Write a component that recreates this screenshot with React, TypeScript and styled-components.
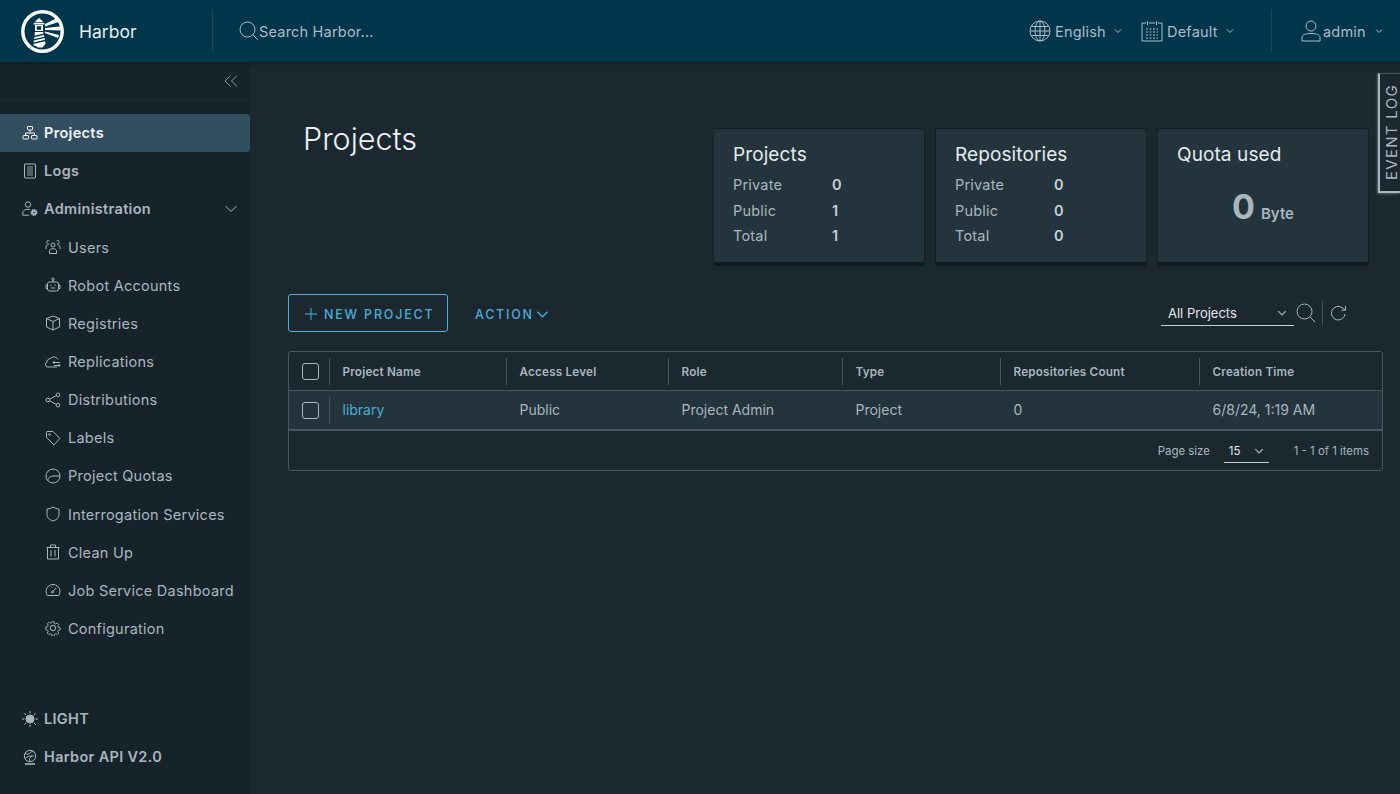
import React from "react";
import styled, { createGlobalStyle } from "styled-components";

const GlobalStyle = createGlobalStyle`
  html, body {
    margin: 0;
    height: 100%;
    background: #1c2830;
    font-family: Inter, "Open Sans", sans-serif;
    overflow: hidden;
  }
  #root {
    height: 100%;
  }
  * {
    box-sizing: border-box;
  }
`;

const Page = styled.div`
  height: 794px;
  display: flex;
  flex-direction: column;
  position: relative;
`;

const Header = styled.header`
  height: 62px;
  flex: none;
  background: #00364c;
  display: flex;
  align-items: center;
  color: #adbbc4;
  box-shadow: 0 2px 3px rgba(0, 0, 0, 0.25);
  z-index: 2;
`;

const Brand = styled.div`
  width: 213px;
  height: 42px;
  padding-left: 21px;
  display: flex;
  align-items: center;
  gap: 15px;
  border-right: 1px solid #1a4a60;
  color: #e9ecef;
  font-size: 17.5px;
`;

const SearchBox = styled.div`
  margin-left: 26px;
  display: flex;
  align-items: center;
  font-size: 14.5px;
  letter-spacing: 0.2px;
  color: #adbbc4;
`;

const HeaderRight = styled.div`
  margin-left: auto;
  display: flex;
  align-items: center;
`;

const HeaderMenu = styled.div<{ $gap?: number; $width: number; $left?: number }>`
  width: ${(p) => p.$width}px;
  margin-left: ${(p) => p.$left ?? 0}px;
  display: flex;
  align-items: center;
  gap: ${(p) => p.$gap ?? 4}px;
  font-size: 14.5px;
  letter-spacing: 0.2px;
`;

const Caret = styled.span<{ $right?: number }>`
  margin-left: auto;
  margin-right: ${(p) => p.$right ?? 0}px;
  display: flex;
`;

const DimCaret = styled.span`
  display: flex;
  color: #a9b6be;
`;

const HeaderDivider = styled.div`
  width: 1px;
  height: 42px;
  background: #1a4a60;
  margin: 0 29px 0 37px;
`;

const Body = styled.div`
  flex: 1;
  display: flex;
  min-height: 0;
`;

const Sidebar = styled.nav`
  width: 250px;
  flex: none;
  background: #17232b;
  display: flex;
  flex-direction: column;
  padding-bottom: 18px;
`;

const CollapseBar = styled.div`
  height: 38px;
  flex: none;
  margin-bottom: 14px;
  padding-right: 12px;
  display: flex;
  align-items: center;
  justify-content: flex-end;
  color: #8a9aa5;
  border-bottom: 1px solid #1c2a33;
`;

const NavItem = styled.a<{ $active?: boolean; $child?: boolean }>`
  height: ${(p) => (p.$child ? 38.15 : 38)}px;
  flex: none;
  display: flex;
  align-items: center;
  gap: ${(p) => (p.$child ? 7 : 6)}px;
  padding-left: ${(p) => (p.$child ? 45 : 22)}px;
  padding-right: 12px;
  padding-bottom: ${(p) => (p.$child ? 0 : 1)}px;
  border-radius: 0 4px 4px 0;
  font-size: 14.5px;
  font-weight: ${(p) => (p.$child ? 400 : 600)};
  letter-spacing: ${(p) => (p.$child ? 0.25 : 0.32)}px;
  color: ${(p) => (p.$active ? "#f1f3f5" : "#a9b6be")};
  background: ${(p) => (p.$active ? "#324f61" : "transparent")};
`;

const NavFooter = styled.div`
  margin-top: auto;
  display: flex;
  flex-direction: column;
`;

const Main = styled.main`
  flex: 1;
  min-width: 0;
  padding: 66px 17px 0 38px;
  background: #1c2830;
`;

const TopRow = styled.div`
  display: flex;
  align-items: flex-start;
`;

const Title = styled.h1`
  margin: 0;
  padding: 0 0 0 15px;
  font-size: 30.5px;
  line-height: 22px;
  font-weight: 300;
  color: #eef1f3;
`;

const Cards = styled.div`
  margin-left: auto;
  margin-right: 14px;
  display: flex;
  gap: 10px;
`;

const Card = styled.section`
  width: 212px;
  height: 138px;
  background: #23343c;
  border: 1px solid #131e25;
  border-bottom: 4px solid #10191f;
  border-radius: 3px;
  padding: 14px 19px;
`;

const CardTitle = styled.h3`
  margin: 0 0 5px;
  font-size: 19px;
  line-height: 24px;
  font-weight: 400;
  letter-spacing: 0.1px;
  color: #e6eaed;
`;

const StatRow = styled.div`
  height: 25.5px;
  display: grid;
  grid-template-columns: 99px 1fr;
  align-items: center;
  font-size: 14.5px;
  letter-spacing: 0.2px;
  color: #a9b6be;
`;

const StatValue = styled.span`
  font-weight: 600;
  color: #c9d1d6;
`;

const QuotaValue = styled.div`
  margin-top: 22px;
  display: flex;
  justify-content: center;
  align-items: baseline;
  gap: 6px;
  color: #a9b6be;
  font-size: 15px;
  font-weight: 600;
`;

const QuotaNumber = styled.span`
  font-size: 34px;
  line-height: 36px;
  font-weight: 700;
`;

const Toolbar = styled.div`
  margin-top: 28px;
  height: 38px;
  display: flex;
  align-items: center;
  padding-right: 36px;
`;

const NewButton = styled.button`
  width: 160px;
  height: 38px;
  padding: 2px 0 0 15px;
  display: flex;
  align-items: center;
  gap: 6px;
  background: transparent;
  border: 1px solid #49afd9;
  border-radius: 3px;
  color: #49afd9;
  font-family: inherit;
  font-size: 12.5px;
  font-weight: 500;
  letter-spacing: 1.8px;
`;

const ActionButton = styled.button`
  margin-left: 27px;
  padding: 2px 0 0;
  display: flex;
  align-items: center;
  gap: 2px;
  background: transparent;
  border: 0;
  color: #49afd9;
  font-family: inherit;
  font-size: 12.5px;
  font-weight: 500;
  letter-spacing: 1.75px;
`;

const Filter = styled.div`
  margin-left: auto;
  margin-right: 2px;
  width: 133px;
  height: 25px;
  padding: 0 7px;
  display: flex;
  align-items: center;
  justify-content: space-between;
  border-bottom: 1px solid #c5ced3;
  color: #e3e7ea;
  font-size: 13px;
`;

const ToolIcon = styled.span`
  display: flex;
  color: #a9b6be;
`;

const ToolDivider = styled.span`
  width: 1px;
  height: 24px;
  margin: 0 7px 0 6px;
  background: #46555f;
`;

const Table = styled.div`
  margin-top: 19px;
  border: 1px solid #485862;
  border-radius: 3px;
`;

const Row = styled.div<{ $head?: boolean }>`
  height: ${(p) => (p.$head ? 39 : 40)}px;
  display: grid;
  grid-template-columns: 41px 177px 162px 174px 158px 199px 1fr;
  align-items: center;
  background: ${(p) => (p.$head ? "transparent" : "#23343c")};
  border-bottom: ${(p) => (p.$head ? "1px solid #46555f" : "2px solid #46555f")};
`;

const CheckCell = styled.div`
  height: 27px;
  padding-left: 13px;
  display: flex;
  align-items: center;
  border-right: 1px solid #46555f;
`;

const Checkbox = styled.span`
  width: 17px;
  height: 17px;
  border: 1px solid #a9b6be;
  border-radius: 3px;
`;

const HeadCell = styled.div<{ $last?: boolean }>`
  height: 27px;
  padding: 1px 0 0 12.5px;
  display: flex;
  align-items: center;
  border-right: ${(p) => (p.$last ? "0" : "1px solid #46555f")};
  font-size: 11.7px;
  font-weight: 600;
  letter-spacing: 0.2px;
  color: #a9b6be;
`;

const Cell = styled.div`
  padding: 0 0 2px 12.5px;
  font-size: 14px;
  color: #a9b6be;
`;

const LinkCell = styled(Cell)`
  color: #49afd9;
`;

const TableFooter = styled.div`
  height: 39px;
  padding: 0 13px 0 0;
  display: flex;
  align-items: center;
  justify-content: flex-end;
  font-size: 11.4px;
  color: #a9b6be;
`;

const PageSize = styled.div`
  width: 45px;
  height: 24px;
  margin: 0 25px 0 14px;
  padding: 1px 5px 0;
  display: flex;
  align-items: center;
  justify-content: space-between;
  border-bottom: 1px solid #c5ced3;
  color: #e3e7ea;
`;

const EventLog = styled.div`
  position: absolute;
  top: 73px;
  right: 0;
  width: 22px;
  height: 120px;
  padding-left: 2px;
  display: flex;
  align-items: center;
  justify-content: center;
  background: #1c2830;
  border-left: 2px solid #a9b6be;
  border-bottom: 2px solid #a9b6be;
  border-top: 1px solid #46555f;
  box-shadow: -1px 1px 2px rgba(170, 182, 190, 0.45);
  color: #a9b6be;
`;

const EventLabel = styled.span`
  writing-mode: vertical-rl;
  transform: rotate(180deg);
  font-size: 15px;
  letter-spacing: 1.3px;
  white-space: nowrap;
`;

const Svg = styled.svg`
  flex: none;
  fill: none;
  stroke: currentColor;
  stroke-width: 1;
`;

type IconProps = { size?: number; children: React.ReactNode };

const Icon = ({ size = 16, children }: IconProps) => (
  <Svg width={size} height={size} viewBox="0 0 16 16">
    {children}
  </Svg>
);

const Chevron = ({ size = 8 }: { size?: number }) => (
  <Svg width={size} height={size} viewBox="0 0 8 8">
    <path d="M1 2.500 4 5.500 7 2.500" />
  </Svg>
);

const HarborLogo = () => (
  <svg width="43" height="43" viewBox="0 0 43 43">
    <circle cx="21.500" cy="21.500" r="19.700" fill="#00364c" stroke="#fff" strokeWidth="3.400" />
    <path fill="#fff" d="M14.500 11 18 8l3.500 3v1h-7z" />
    <path fill="#fff" d="M13 12.800h10l.6 1.700H12.400z" />
    <path fill="#fff" d="M14 15h8v6h-8z" />
    <path fill="#00364c" d="M15.800 16.300h4.400v3.400h-4.400z" />
    <path fill="#fff" d="M13.800 22h8.500l.3 1.600-9 2.200zM13.400 27.200l9.500-2.300.3 1.800-10 2.400zM12.900 30.600l10.700-2.600.3 1.800L12.600 32.500zM12.400 34l11.700-2.800.4 2.500-3 3.700h-4l-5.100-2.400z" />
    <path fill="#fff" d="M24 14 35 8.500l2.500 3.500L24 16.500zM24 18l15-1.500.5 4L24 20zM24 21.500 38 25l-1 3L24 23z" />
  </svg>
);

const ProjectsIcon = () => (
  <Icon>
    <rect x="5.500" y="1.500" width="5" height="3.500" rx=".5" />
    <path d="M8 5v3M3.500 10.500V8h9v2.500" />
    <rect x="1" y="10.500" width="5.500" height="3.500" rx=".5" />
    <rect x="9.500" y="10.500" width="5.500" height="3.500" rx=".5" />
  </Icon>
);

const LogsIcon = () => (
  <Icon>
    <rect x="2.500" y="1" width="11" height="14" rx=".5" />
    <path d="M5 4h6M5 6h6M5 8h6M5 10h6M5 12h6" strokeWidth=".8" />
  </Icon>
);

const AdminIcon = () => (
  <Icon>
    <circle cx="6" cy="3.500" r="2.700" />
    <path d="M.8 14.200V12c0-2 2-3.700 5.200-3.700 1 0 1.600.1 2.300.4" />
    <path d="M.8 14.200h6.500" />
    <circle cx="12" cy="11.500" r="2.600" fill="currentColor" strokeWidth="1.800" strokeDasharray="1.300 .7" />
    <circle cx="12" cy="11.500" r=".8" fill="#17232b" stroke="none" />
  </Icon>
);

const UsersIcon = () => (
  <Icon>
    <circle cx="8" cy="6" r="2" />
    <path d="M4.500 14.500v-2.500c0-1.500 1.500-2.300 3.500-2.300s3.500.8 3.500 2.300v2.500z" />
    <path d="M4 4.800a1.700 1.700 0 1 1 .4-3M12 4.800a1.700 1.700 0 1 0-.4-3M1 10V7.800C1 6.500 2 6 3.300 6M15 10V7.800C15 6.500 14 6 12.700 6" />
  </Icon>
);

const RobotIcon = () => (
  <Icon>
    <rect x="2.500" y="5" width="11" height="9" rx="2" />
    <circle cx="8" cy="2.200" r="1.200" />
    <path d="M8 3.400V5M2.500 8H1v3.500h1.500M13.500 8H15v3.500h-1.500M6 11h4" />
    <path d="M5.800 7.800v.9M10.200 7.800v.9" strokeWidth="1.200" />
  </Icon>
);

const BoxIcon = () => (
  <Icon>
    <path d="M8 1 14.500 3.500v8.500L8 15 1.500 12V3.500zM1.500 3.500 8 6.500l6.500-3M8 6.500V15" />
  </Icon>
);

const CloudIcon = () => (
  <Icon>
    <path d="M5 14H3a2.500 2.500 0 0 1-1-4.800 3 3 0 0 1 3.200-3.400A4.500 4.500 0 0 1 13 6.500" />
    <path d="M5 14h7M8 9.500h7M9.500 8 8 9.500 9.500 11M15 12.500H9M13.500 11l1.500 1.500-1.500 1.500" />
  </Icon>
);

const ShareIcon = () => (
  <Icon>
    <circle cx="2.800" cy="8" r="1.800" />
    <circle cx="13" cy="2.800" r="1.800" />
    <circle cx="13" cy="13.200" r="1.800" />
    <path d="M4.400 7.200 11.400 3.600M4.400 8.800l7 3.600" />
  </Icon>
);

const TagIcon = () => (
  <Icon>
    <path d="M1.500 2.500 2 1.500h6L15 8.500 9 14.800 1.500 7.500z" />
    <circle cx="4.500" cy="4.500" r=".8" />
  </Icon>
);

const QuotaIcon = () => (
  <Icon>
    <circle cx="8" cy="8" r="7" />
    <path d="M2.500 12.500C3.500 9.500 5.500 8 8 8h7" />
  </Icon>
);

const ShieldIcon = () => (
  <Icon>
    <path d="M8 1c1.500 1 3.500 1.800 6 2v5.500C14 12 11 14 8 15 5 14 2 12 2 8.500V3c2.500-.2 4.500-1 6-2z" />
  </Icon>
);

const TrashIcon = () => (
  <Icon>
    <path d="M1.500 3.500h13M5.500 3.500V1h5v2.500M2.500 3.500V15h11V3.500M6 6V12.500M10 6V12.500" />
  </Icon>
);

const GaugeIcon = () => (
  <Icon>
    <path d="M2.300 13.500a7 7 0 1 1 11.400 0z" />
    <path d="M8 9.500 11 6" />
    <circle cx="7.500" cy="10" r="1" />
  </Icon>
);

const GearIcon = () => (
  <Icon>
    <circle cx="8" cy="8" r="2.700" />
    <path d="M6.800 1h2.400l.4 2 1.400.6 1.700-1.100 1.700 1.700-1.100 1.700.6 1.400 2 .4v2.400l-2 .4-.6 1.400 1.100 1.700-1.700 1.700-1.700-1.100-1.400.6-.4 2H6.800l-.4-2-1.400-.6-1.700 1.100-1.700-1.700 1.100-1.700-.6-1.400-2-.4V6.800l2-.4.6-1.400-1.100-1.700 1.700-1.700 1.700 1.100 1.400-.6z" transform="translate(.8 .8) scale(.9)" />
  </Icon>
);

const SunIcon = () => (
  <Icon>
    <circle cx="8" cy="8" r="4" fill="currentColor" />
    <path d="M8 0v2.500M8 13.500V16M0 8h2.500M13.500 8H16M2.300 2.300l1.800 1.800M11.900 11.900l1.800 1.800M13.700 2.300l-1.800 1.800M4.100 11.900l-1.800 1.800" />
  </Icon>
);

const ApiIcon = () => (
  <Icon>
    <circle cx="8" cy="7" r="5.700" />
    <path d="M3 4.500c2 1.500 4 .5 5.500-1s2.500-1 3-.5M3 9.500c2-2 5-3 9-2.500M8 12c-1-1.500-.5-3 2-5" />
    <path d="M3 15h10" strokeWidth="1.600" />
  </Icon>
);

const SearchIcon = ({ size = 20 }: { size?: number }) => (
  <Svg width={size} height={size} viewBox="0 0 20 20">
    <circle cx="8.500" cy="8.500" r="7.500" />
    <path d="M14 14l5 5" />
  </Svg>
);

const GlobeIcon = () => (
  <Svg width="22" height="22" viewBox="0 0 22 22">
    <circle cx="11" cy="11" r="10" />
    <ellipse cx="11" cy="11" rx="5" ry="10" />
    <path d="M11 1v20M2.200 6.500h17.600M1 11h20M2.200 15.500h17.600" />
  </Svg>
);

const CalendarIcon = () => (
  <Svg width="22" height="22" viewBox="0 0 22 22">
    <path d="M5 3H1v18h20V3h-4M8 3h6M6.500 1v4M15.500 1v4" />
    <path d="M5 9h12M5 12h12M5 15h12M5 18h12" strokeDasharray="2 1.500" strokeWidth="1.200" />
  </Svg>
);

const UserIcon = () => (
  <Svg width="20" height="22" viewBox="0 0 20 22">
    <circle cx="10" cy="6" r="5" />
    <path d="M1 21v-3.500C1 15 4 13.500 10 13.500s9 1.500 9 4V21z" />
  </Svg>
);

const RefreshIcon = () => (
  <Svg width="17" height="17" viewBox="0 0 17 17">
    <path d="M15 9a6.800 6.800 0 1 1-3-6.500L15 5" />
    <path d="M15.500 1v4.200h-4.200" />
  </Svg>
);

const children: [React.ReactNode, string][] = [
  [<UsersIcon />, "Users"],
  [<RobotIcon />, "Robot Accounts"],
  [<BoxIcon />, "Registries"],
  [<CloudIcon />, "Replications"],
  [<ShareIcon />, "Distributions"],
  [<TagIcon />, "Labels"],
  [<QuotaIcon />, "Project Quotas"],
  [<ShieldIcon />, "Interrogation Services"],
  [<TrashIcon />, "Clean Up"],
  [<GaugeIcon />, "Job Service Dashboard"],
  [<GearIcon />, "Configuration"],
];

const columns = ["Project Name", "Access Level", "Role", "Type", "Repositories Count", "Creation Time"];

const StatCard = ({ title, stats }: { title: string; stats: [string, number][] }) => (
  <Card>
    <CardTitle>{title}</CardTitle>
    {stats.map(([label, value]) => (
      <StatRow key={label}>
        <span>{label}</span>
        <StatValue>{value}</StatValue>
      </StatRow>
    ))}
  </Card>
);

export default function App() {
  return (
    <Page>
      <GlobalStyle />
      <Header>
        <Brand>
          <HarborLogo />
          Harbor
        </Brand>
        <SearchBox>
          <SearchIcon />
          Search Harbor...
        </SearchBox>
        <HeaderRight>
          <HeaderMenu $width={93}>
            <GlobeIcon />
            English
            <Caret>
              <Chevron />
            </Caret>
          </HeaderMenu>
          <HeaderMenu $width={93} $left={19}>
            <CalendarIcon />
            Default
            <Caret>
              <Chevron />
            </Caret>
          </HeaderMenu>
          <HeaderDivider />
          <HeaderMenu $width={99} $gap={2}>
            <UserIcon />
            admin
            <Caret $right={17}>
              <Chevron />
            </Caret>
          </HeaderMenu>
        </HeaderRight>
      </Header>
      <Body>
        <Sidebar>
          <CollapseBar>
            <Svg width="14" height="14" viewBox="0 0 14 14">
              <path d="M6.500 1.500 1 7l5.500 5.500M13 1.500 7.500 7l5.500 5.500" />
            </Svg>
          </CollapseBar>
          <NavItem $active>
            <ProjectsIcon />
            Projects
          </NavItem>
          <NavItem>
            <LogsIcon />
            Logs
          </NavItem>
          <NavItem>
            <AdminIcon />
            Administration
            <Caret>
              <Svg width="14" height="14" viewBox="0 0 14 14">
                <path d="M1.500 4 7 9.500 12.500 4" />
              </Svg>
            </Caret>
          </NavItem>
          {children.map(([icon, label]) => (
            <NavItem $child key={label}>
              {icon}
              {label}
            </NavItem>
          ))}
          <NavFooter>
            <NavItem>
              <SunIcon />
              LIGHT
            </NavItem>
            <NavItem>
              <ApiIcon />
              Harbor API V2.0
            </NavItem>
          </NavFooter>
        </Sidebar>
        <Main>
          <TopRow>
            <Title>Projects</Title>
            <Cards>
              <StatCard
                title="Projects"
                stats={[
                  ["Private", 0],
                  ["Public", 1],
                  ["Total", 1],
                ]}
              />
              <StatCard
                title="Repositories"
                stats={[
                  ["Private", 0],
                  ["Public", 0],
                  ["Total", 0],
                ]}
              />
              <Card>
                <CardTitle>Quota used</CardTitle>
                <QuotaValue>
                  <QuotaNumber>0</QuotaNumber>
                  Byte
                </QuotaValue>
              </Card>
            </Cards>
          </TopRow>
          <Toolbar>
            <NewButton>
              <Svg width="14" height="14" viewBox="0 0 14 14">
                <path d="M7 1v12M1 7h12" />
              </Svg>
              NEW PROJECT
            </NewButton>
            <ActionButton>
              ACTION
              <Svg width="13" height="13" viewBox="0 0 14 14">
                <path d="M1.500 4 7 9.500 12.500 4" strokeWidth="1.400" />
              </Svg>
            </ActionButton>
            <Filter>
              All Projects
              <DimCaret>
                <Chevron size={10} />
              </DimCaret>
            </Filter>
            <ToolIcon>
              <SearchIcon />
            </ToolIcon>
            <ToolDivider />
            <ToolIcon>
              <RefreshIcon />
            </ToolIcon>
          </Toolbar>
          <Table>
            <Row $head>
              <CheckCell>
                <Checkbox />
              </CheckCell>
              {columns.map((name, i) => (
                <HeadCell key={name} $last={i === columns.length - 1}>
                  {name}
                </HeadCell>
              ))}
            </Row>
            <Row>
              <CheckCell>
                <Checkbox />
              </CheckCell>
              <LinkCell>library</LinkCell>
              <Cell>Public</Cell>
              <Cell>Project Admin</Cell>
              <Cell>Project</Cell>
              <Cell>0</Cell>
              <Cell>6/8/24, 1:19 AM</Cell>
            </Row>
            <TableFooter>
              Page size
              <PageSize>
                15
                <DimCaret>
                  <Chevron size={10} />
                </DimCaret>
              </PageSize>
              1 - 1 of 1 items
            </TableFooter>
          </Table>
        </Main>
      </Body>
      <EventLog>
        <EventLabel>EVENT LOG</EventLabel>
      </EventLog>
    </Page>
  );
}
